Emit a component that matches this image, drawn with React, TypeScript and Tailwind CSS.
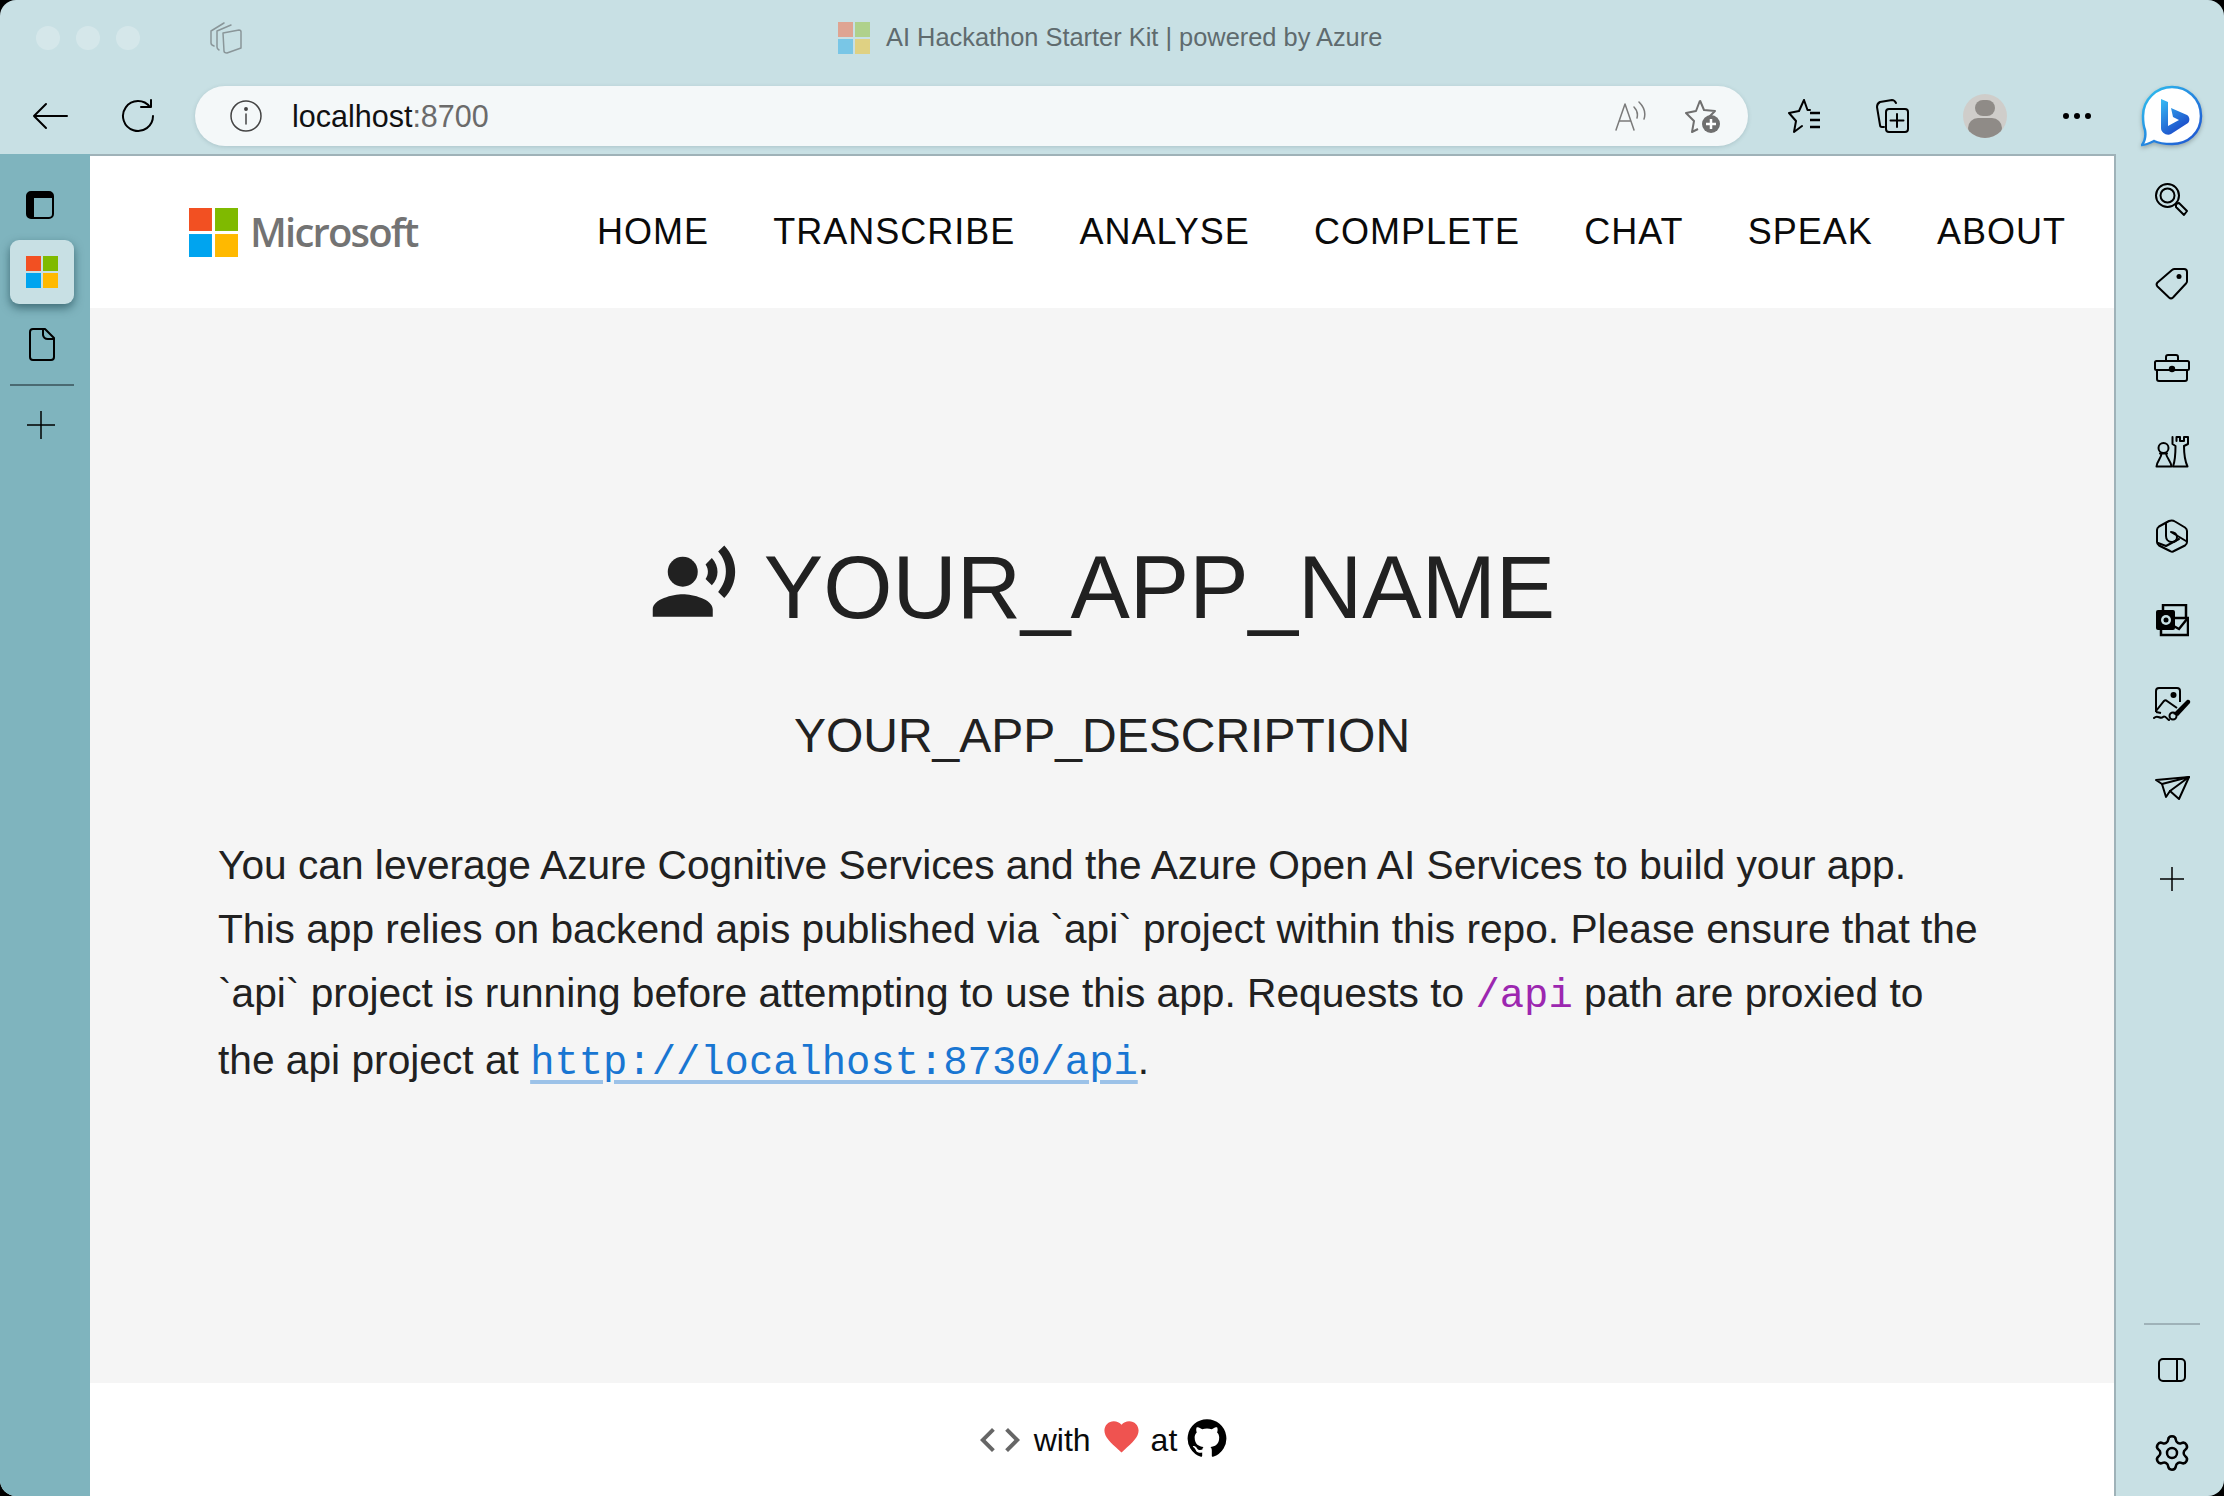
import { Settings } from "lucide-react";

const sans = "font-['Liberation_Sans',Arial,sans-serif]";

function MsLogo({ size, muted }: { size: number; muted?: boolean }) {
  const colors = muted
    ? ["#dfa492", "#afd18b", "#79c6e6", "#dfd183"]
    : ["#f25022", "#7fba00", "#00a4ef", "#ffb900"];
  return (
    <svg width={size} height={size} viewBox="0 0 32 32" className="shrink-0">
      <rect x="0" y="0" width="15" height="15" fill={colors[0]} />
      <rect x="17" y="0" width="15" height="15" fill={colors[1]} />
      <rect x="0" y="17" width="15" height="15" fill={colors[2]} />
      <rect x="17" y="17" width="15" height="15" fill={colors[3]} />
    </svg>
  );
}

function Line({ w, h, children, sw = 2 }: { w: number; h: number; children: React.ReactNode; sw?: number }) {
  return (
    <svg width={w} height={h} viewBox={`0 0 ${w} ${h}`} fill="none" stroke="currentColor" strokeWidth={sw} strokeLinecap="round" strokeLinejoin="round" className="shrink-0">
      {children}
    </svg>
  );
}

function BingIcon() {
  return (
    <svg width="62" height="62" viewBox="0 0 62 62" className="shrink-0 drop-shadow-[0_2px_2px_rgba(0,0,0,0.25)]">
      <defs>
        <linearGradient id="ring" x1="0" y1="0" x2="1" y2="1">
          <stop offset="0" stopColor="#2fc4f0" />
          <stop offset="1" stopColor="#1d4fd0" />
        </linearGradient>
        <linearGradient id="bee" x1="0" y1="0" x2="0.6" y2="1">
          <stop offset="0" stopColor="#37bdf5" />
          <stop offset="1" stopColor="#1b48c8" />
        </linearGradient>
      </defs>
      <path d="M31 2C46 2 60 13 60 31C60 48 47 59 31 59C24 59 17 58 13 56C9 58 5 60 1 60C4 56 5 51 4 45C2 40 2 36 2 31C2 14 16 2 31 2Z" fill="#fff" stroke="url(#ring)" strokeWidth="2.5" />
      <path d="M20 14L27 17V41L38 35L32 32L30 23L46 30C49 32 49 36 47 38L30 49C26 51 20 48 20 43Z" fill="url(#bee)" />
    </svg>
  );
}

function RightRail() {
  return (
    <div className="w-[108px] shrink-0 flex flex-col items-center text-black pt-[4px] pl-[4px]">
      <div className="h-[84px] flex items-center justify-center">
        <Line w={34} h={34}>
          <circle cx="12.5" cy="12.5" r="11.5" />
          <circle cx="12.5" cy="12.5" r="7" />
          <path d="M21 21L24 20L32 28L29 32L21 24Z" />
        </Line>
      </div>
      <div className="h-[84px] flex items-center justify-center">
        <Line w={34} h={34}>
          <path d="M20 2H29A3 3 0 0 1 32 5V14A3 3 0 0 1 31 16.500L18 30.500A3 3 0 0 1 14 30.500L2.500 19.500A3 3 0 0 1 2.500 15.500L17 3A4 4 0 0 1 20 2Z" />
          <circle cx="24" cy="9.500" r="2.500" fill="currentColor" stroke="none" />
        </Line>
      </div>
      <div className="h-[84px] flex items-center justify-center">
        <Line w={36} h={28}>
          <path d="M12 7V3A2 2 0 0 1 14 1H22A2 2 0 0 1 24 3V7" />
          <rect x="1" y="7" width="34" height="9" rx="1.500" />
          <path d="M3 16V25A2 2 0 0 0 5 27H31A2 2 0 0 0 33 25V16" />
          <circle cx="18" cy="15" r="3.200" fill="currentColor" stroke="none" />
        </Line>
      </div>
      <div className="h-[84px] flex items-center justify-center">
        <Line w={34} h={32}>
          <circle cx="8.500" cy="12" r="5" />
          <path d="M5 17.500H12M6.500 17.500C6.500 22 2 25 1.500 30.500H16.500C16 25 11.500 22 11 17.500" />
          <path d="M17.500 1V8L20.500 10C20.500 18 20 25 18 30.500H32.500C30 25 29 18 29 10L33 8V1H29V5H25V1H21.500V5" />
        </Line>
      </div>
      <div className="h-[84px] flex items-center justify-center">
        <Line w={34} h={34}>
          <path d="M14 2L4 7.500C2.500 8.500 2 9.500 2 11V23C2 24.500 2.500 25.500 4 26.500L15 32C16.500 33 18 33 19 32L30 26.500C31.500 25.500 32 24.500 32 23V12C32 10.500 31.500 9.500 30 8.500L20 2.500C18 1.200 16 1.200 14 2Z" />
          <path d="M11 4.500V17C11 20 13 23 17 23C20 23 22 21 22 18C22 15 19 13 16 13L31 22" />
          <path d="M3 24L11 27L24 20" />
        </Line>
      </div>
      <div className="h-[84px] flex items-center justify-center">
        <svg width="33" height="33" viewBox="0 0 33 33" className="shrink-0">
          <rect x="7" y="1" width="23" height="14" fill="none" stroke="#000" strokeWidth="2.500" />
          <path d="M5 31V14H32V31Z" fill="#c8e0e4" stroke="#000" strokeWidth="2.500" />
          <path d="M14 20L23 25L31 15" fill="none" stroke="#000" strokeWidth="2.500" />
          <rect x="0" y="6" width="19" height="20" rx="2" fill="#000" />
          <circle cx="10" cy="16" r="5" fill="#c8e0e4" />
          <circle cx="10" cy="16" r="2.500" fill="#000" />
        </svg>
      </div>
      <div className="h-[84px] flex items-center justify-center">
        <svg width="38" height="36" viewBox="0 0 38 36" className="shrink-0" fill="none" stroke="#000" strokeWidth="2">
          <path d="M3 26V5A3 3 0 0 1 6 2H24A3 3 0 0 1 27 5V16" />
          <path d="M3 25L11 15C12 14 13 14 14 15L24 22M3 26L8 27" />
          <circle cx="20.500" cy="9" r="3" fill="#000" stroke="none" />
          <path d="M20 28L34 14C36 13 38 15 37 17L25 30Z" fill="#000" stroke="none" />
          <circle cx="20" cy="30" r="3.500" />
          <path d="M1 32C5 28 7 34 10 31C12 29 14 33 16 34" strokeLinecap="round" />
        </svg>
      </div>
      <div className="h-[84px] flex items-center justify-center">
        <Line w={35} h={25}>
          <path d="M1 4L34 1L24 23L15 15L11 21L7 8Z" />
          <path d="M7 8L34 1L15 15" />
        </Line>
      </div>
      <div className="mt-[7px] h-[84px] flex items-center justify-center">
        <Line w={24} h={24} sw={1.5}>
          <path d="M12 0V24M0 12H24" />
        </Line>
      </div>
      <div className="mt-auto w-[56px] h-[2px] bg-[#9fb2b8]" />
      <div className="mt-[33px] flex items-center justify-center">
        <Line w={28} h={24}>
          <rect x="1" y="1" width="26" height="22" rx="4" />
          <path d="M19 1V23" />
        </Line>
      </div>
      <div className="mt-[51px] mb-[23px] h-[40px] flex items-center justify-center">
        <Settings size={40} strokeWidth={1.5} />
      </div>
    </div>
  );
}

function LeftRail() {
  return (
    <div className="w-[90px] shrink-0 bg-[#7fb4be] flex flex-col pt-[36px] pl-[10px] text-black">
      <div className="w-[60px] flex justify-center">
        <Line w={30} h={30}>
          <rect x="2" y="2" width="26" height="26" rx="4" />
          <path d="M2 6A4 4 0 0 1 6 2H24A4 4 0 0 1 28 6V7H9V28H6A4 4 0 0 1 2 24Z" fill="currentColor" stroke="none" />
          <path d="M9 7H28" />
        </Line>
      </div>
      <div className="mt-[20px] w-[64px] h-[64px] rounded-[9px] bg-[#c8e0e4] flex items-center justify-center shadow-[0_4px_10px_rgba(20,60,70,0.6)]">
        <MsLogo size={32} />
      </div>
      <div className="mt-[23px] w-[64px] flex justify-center">
        <Line w={26} h={34}>
          <path d="M4 2H16L25 11V30A3 3 0 0 1 22 33H4A3 3 0 0 1 1 30V5A3 3 0 0 1 4 2Z" />
          <path d="M14 2V8A5 5 0 0 0 19 12H25" />
        </Line>
      </div>
      <div className="mt-[23px] w-[64px] h-[2px] bg-[#4a6a72]" />
      <div className="mt-[25px] w-[62px] flex justify-center">
        <Line w={28} h={28} sw={1.5}>
          <path d="M14 0V28M0 14H28" />
        </Line>
      </div>
    </div>
  );
}

function Nav() {
  const items = ["HOME", "TRANSCRIBE", "ANALYSE", "COMPLETE", "CHAT", "SPEAK", "ABOUT"];
  return (
    <div className="h-[152px] shrink-0 bg-white flex items-center pl-[99px] pr-[48px]">
      <MsLogo size={49} />
      <span className="ml-[12px] font-['Open_Sans',sans-serif] font-semibold text-[40px] leading-none tracking-[-1.8px] text-[#737373]">
        Microsoft
      </span>
      <div className="ml-auto flex items-center gap-[64.2px]">
        {items.map((item) => (
          <span key={item} className="text-[36px] leading-none tracking-[1px] text-[#0a0a0a]">
            {item}
          </span>
        ))}
      </div>
    </div>
  );
}

export default function App() {
  return (
    <div className={`w-[2224px] h-[1496px] bg-black overflow-hidden ${sans}`}>
      <div className="w-full h-full rounded-[16px] overflow-hidden bg-[#c8e0e4] flex flex-col">
        {/* title bar */}
        <div className="h-[76px] shrink-0 flex items-center pl-[36px]">
          <div className="flex gap-[16px]">
            <div className="w-[24px] h-[24px] rounded-full bg-[#d5e7ea]" />
            <div className="w-[24px] h-[24px] rounded-full bg-[#d5e7ea]" />
            <div className="w-[24px] h-[24px] rounded-full bg-[#d5e7ea]" />
          </div>
          <div className="ml-[70px] text-[#8a9699]">
            <Line w={32} h={32} sw={1.5}>
              <path d="M13 11L29 8Q31 8 31 10V26L17 31Q14 31 14 29Z" />
              <path d="M9 28Q7 27 7 25V9L21 3" />
              <path d="M4 24Q1 23 1 21V9L14 1" />
            </Line>
          </div>
          <div className="ml-[596px] flex items-center">
            <MsLogo size={32} muted />
            <span className="ml-[16px] text-[25.4px] leading-none text-[#5f6b6e]">AI Hackathon Starter Kit | powered by Azure</span>
          </div>
        </div>

        {/* toolbar */}
        <div className="h-[78px] shrink-0 flex items-center text-black pt-[2px]">
          <div className="ml-[32px]">
            <Line w={36} h={28}>
              <path d="M35 14H2M14 2L2 14L14 26" />
            </Line>
          </div>
          <div className="ml-[53px]">
            <Line w={34} h={34}>
              <path d="M29 8A15 15 0 1 0 32 17" />
              <path d="M20 8H30V1" />
            </Line>
          </div>
          <div className="ml-[40px] w-[1553px] h-[60px] rounded-[30px] bg-[#f4f8f9] flex items-center pl-[35px] pr-[28px] shadow-[0_1px_4px_rgba(60,90,100,0.2)]">
            <div className="text-[#444]">
              <Line w={32} h={32} sw={1.5}>
                <circle cx="16" cy="16" r="15" />
                <path d="M16 14V24" />
                <circle cx="16" cy="9" r="1.200" fill="currentColor" />
              </Line>
            </div>
            <span className="ml-[30px] text-[30.5px] leading-none text-[#111]">
              localhost<span className="text-[#6b6b6b]">:8700</span>
            </span>
            <div className="ml-auto text-[#7a7a7a]">
              <Line w={32} h={30} sw={1.5}>
                <path d="M1 29L10 3L19 29M4.500 20H15.500" />
                <path d="M19 6C22 9 23 13 22 17M24 1C29 6 31 12 29 18" />
              </Line>
            </div>
            <div className="ml-[38px] text-[#6f6f6f]">
              <svg width="35" height="34" viewBox="0 0 35 34" fill="none" className="shrink-0">
                <path d="M15 1.500L19 11L30 12L23 19M13 30L7 33L9 22L1 14L11 12L15 1.500" stroke="currentColor" strokeWidth="2" strokeLinejoin="round" />
                <circle cx="26" cy="25" r="9" fill="currentColor" />
                <path d="M26 20V30M21 25H31" stroke="#fff" strokeWidth="2.500" />
              </svg>
            </div>
          </div>
          <div className="ml-[40px]">
            <Line w={33} h={34}>
              <path d="M16 1L19.500 11H22M11 12L1 14L8 22L6 33L14 27M16 1L11 12" />
              <path d="M22 14H32M22 21H32M22 28H32" strokeWidth="2.500" strokeLinecap="butt" />
            </Line>
          </div>
          <div className="ml-[55px]">
            <Line w={33} h={34}>
              <path d="M8 28H6C5 28 4 27 4 26L1 8C1 5 2 4 4 3L16 1C18 1 19 2 20 4" />
              <rect x="10" y="10" width="22" height="23" rx="3" />
              <path d="M21 15V28M14.500 21.500H27.500" />
            </Line>
          </div>
          <div className="ml-[54px] w-[44px] h-[44px] rounded-full bg-[#cfcdca] overflow-hidden flex flex-col items-center shrink-0">
            <div className="mt-[6px] w-[20px] h-[20px] rounded-full bg-[#8f8b87]" />
            <div className="mt-[2px] w-[34px] h-[24px] rounded-full bg-[#8f8b87]" />
          </div>
          <div className="ml-[56px] flex gap-[5px]">
            <div className="w-[6px] h-[6px] rounded-full bg-black" />
            <div className="w-[6px] h-[6px] rounded-full bg-black" />
            <div className="w-[6px] h-[6px] rounded-full bg-black" />
          </div>
          <div className="ml-[50px]">
            <BingIcon />
          </div>
        </div>

        {/* sidebars + page */}
        <div className="flex-1 min-h-0 flex">
          <LeftRail />
          <div className="flex-1 min-w-0 border-t-[2px] border-r-[2px] border-[#9fb2b8] flex flex-col">
            <Nav />
            <main className="flex-1 bg-[#f5f5f5] flex flex-col items-center text-[#212121] pt-[234px]">
              <div className="flex items-center">
                <svg width="90" height="90" viewBox="0 0 24 24" fill="#212121" className="shrink-0 -translate-y-[4px]">
                  <circle cx="9" cy="9" r="4" />
                  <path d="M9 15c-2.670 0-8 1.340-8 4v2h16v-2c0-2.660-5.330-4-8-4zm7.760-9.640l-1.680 1.690c.840 1.180.840 2.710 0 3.890l1.680 1.690c2.020-2.020 2.020-5.070 0-7.270zM20.070 2l-1.630 1.630c2.770 3.020 2.770 7.560 0 10.740L20.070 16c3.900-3.890 3.910-9.950 0-14z" />
                </svg>
                <h1 className="ml-[25px] text-[89px] leading-none font-normal">YOUR_APP_NAME</h1>
              </div>
              <h2 className="mt-[80px] text-[48px] leading-none font-normal">YOUR_APP_DESCRIPTION</h2>
              <div className="w-full pl-[128px]">
                <p className="mt-[73px] w-[1760px] text-[40.7px] leading-[64px]">
                  You can leverage Azure Cognitive Services and the Azure Open AI Services to build your app. This app relies on backend apis published via `api` project within this repo. Please ensure that the `api` project is running before attempting to use this app. Requests to{" "}
                  <code className="font-['Liberation_Mono',monospace] text-[40.5px] text-[#9c27b0]">/api</code> path are proxied to the api project at{" "}
                  <a href="#" className="font-['Liberation_Mono',monospace] text-[40.5px] text-[#1976d2] underline decoration-[#9cc2e8] decoration-[4px] underline-offset-[6px]">
                    http://localhost:8730/api
                  </a>
                  .
                </p>
              </div>
            </main>
            <footer className="h-[113px] shrink-0 bg-white flex items-center justify-center text-[32px] text-[#0a0a0a]">
              <svg width="48" height="48" viewBox="0 0 24 24" fill="#666" className="shrink-0">
                <path d="M9.400 16.600L4.800 12l4.600-4.600L8 6l-6 6 6 6 1.400-1.400zm5.200 0l4.600-4.600-4.600-4.600L16 6l6 6-6 6-1.400-1.400z" />
              </svg>
              <span className="ml-[10px]">with</span>
              <svg width="41" height="41" viewBox="0 0 24 24" fill="#ef5350" className="ml-[10px] -mt-[6px] shrink-0">
                <path d="M12 21.350l-1.450-1.320C5.400 15.360 2 12.280 2 8.500 2 5.420 4.420 3 7.500 3c1.740 0 3.410.810 4.500 2.090C13.090 3.810 14.760 3 16.500 3 19.580 3 22 5.420 22 8.500c0 3.780-3.400 6.860-8.550 11.540L12 21.350z" />
              </svg>
              <span className="ml-[9px]">at</span>
              <svg width="42" height="42" viewBox="0 0 24 24" fill="#000" className="ml-[9px] -mt-[4px] shrink-0">
                <path d="M12 1.270a11 11 0 00-3.480 21.460c.550.090.730-.280.730-.550v-1.840c-3.030.640-3.670-1.460-3.670-1.460-.550-1.290-1.280-1.650-1.280-1.650-.920-.650.100-.650.100-.650 1.100 0 1.730 1.100 1.730 1.100.920 1.650 2.570 1.200 3.210.920a2 2 0 01.640-1.470c-2.470-.270-5.040-1.190-5.040-5.500 0-1.100.460-2.100 1.200-2.840a3.760 3.760 0 010-2.930s.910-.280 3.110 1.100c1.800-.490 3.700-.490 5.500 0 2.100-1.380 3.020-1.100 3.020-1.100a3.760 3.760 0 010 2.930c.830.740 1.200 1.740 1.200 2.940 0 4.210-2.570 5.130-5.040 5.400.450.370.820.920.820 2.020v3.030c0 .270.100.640.730.550A11 11 0 0012 1.270" />
              </svg>
            </footer>
          </div>
          <RightRail />
        </div>
      </div>
    </div>
  );
}
